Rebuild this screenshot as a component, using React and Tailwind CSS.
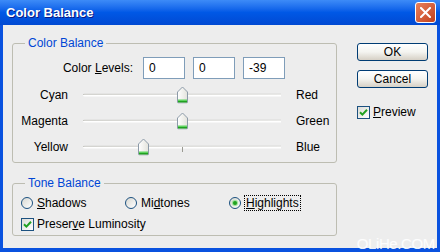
import React from 'react';

const sliders = [
  { left: 'Cyan', right: 'Red', value: 0 },
  { left: 'Magenta', right: 'Green', value: 0 },
  { left: 'Yellow', right: 'Blue', value: -39 },
];

function Thumb({ value }) {
  // track is 198px wide, center at 99, 100 units per half
  const x = 99 + value * 0.99 - 5.5;
  return (
    <svg width="11" height="17" viewBox="0 0 11 17" className="absolute top-1/2 -translate-y-1/2" style={{ left: x }}>
      <defs>
        <linearGradient id="thumbfill" x1="0" y1="0" x2="1" y2="0">
          <stop offset="0" stopColor="#ffffff" />
          <stop offset="1" stopColor="#e3e3dc" />
        </linearGradient>
      </defs>
      <path d="M0.5 5.5 L5.5 0.5 L10.5 5.5 L10.5 15.5 Q10.5 16.5 9.5 16.5 L1.5 16.5 Q0.5 16.5 0.5 15.5 Z" fill="url(#thumbfill)" stroke="#8c9aa8" />
      <rect x="1" y="13" width="9" height="1.5" fill="#5ed35e" />
      <rect x="1" y="14.5" width="9" height="1.5" fill="#21a121" />
    </svg>
  );
}

function SliderRow({ left, right, value }) {
  return (
    <div className="flex items-center h-[26px]">
      <div className="w-[55px] text-right">{left}</div>
      <div className="relative ml-[15px] w-[198px] h-full">
        <div className="absolute left-0 right-0 top-1/2 -translate-y-1/2 h-[3px] rounded-l-full border-t border-[#a8a8a0] bg-white" />
        <div className="absolute left-[99px] top-1/2 w-px h-[5px] bg-[#9a9a92]" />
        <Thumb value={value} />
      </div>
      <div className="ml-[15px]">{right}</div>
    </div>
  );
}

function Check({ className = '' }) {
  return (
    <span className={`inline-flex items-center justify-center w-[13px] h-[13px] border border-[#1c5180] bg-gradient-to-br from-[#dcdcd7] to-white ${className}`}>
      <svg width="9" height="9" viewBox="0 0 9 9">
        <path d="M1 4.2 L3.4 6.6 L8 1.8" fill="none" stroke="#21a121" strokeWidth="2" />
      </svg>
    </span>
  );
}

function Radio({ checked }) {
  return (
    <span className="inline-flex items-center justify-center w-[12px] h-[12px] rounded-full border border-[#1c5180] bg-gradient-to-br from-[#d8d8d2] to-white">
      {checked && <span className="w-[4px] h-[4px] rounded-full bg-[#21a121] shadow-[0_0_1px_1px_#8ee08e]" />}
    </span>
  );
}

function Button({ children, className = '' }) {
  return (
    <button className={`w-[71px] h-[18px] rounded-[3px] border border-[#003c74] bg-gradient-to-b from-white via-[#f4f4f0] to-[#d6d0c5] text-[12px] leading-none text-black ${className}`}>
      {children}
    </button>
  );
}

export default function App() {
  return (
    <div className="relative w-[440px] h-[252px] flex flex-col font-['Liberation_Sans',Arial,sans-serif] text-[12px] text-black bg-white overflow-hidden">
      <div className="h-[25px] flex items-center justify-between pl-[6px] pr-[4px] bg-gradient-to-b from-[#3d8bf7] via-[#0058e6] to-[#0149d2]">
        <span className="text-white font-bold text-[13px] [text-shadow:1px_1px_#0a1883]">Color Balance</span>
        <span className="w-[21px] h-[21px] rounded-[3px] border border-white bg-gradient-to-br from-[#e9805c] to-[#c2401a] flex items-center justify-center">
          <svg width="11" height="11" viewBox="0 0 11 11">
            <path d="M1 1 L10 10 M10 1 L1 10" stroke="white" strokeWidth="2" strokeLinecap="square" />
          </svg>
        </span>
      </div>

      <div className="flex-1 flex border-l-[3px] border-r-[3px] border-b-[4px] border-[#0a52df] bg-[#ededed] pl-[9px] pt-[11px]">
        <div className="w-[325px]">
          <fieldset className="h-[127px] border border-[#bdbdb2] rounded-[3px]">
            <legend className="ml-[12px] px-[3px] leading-[14px] text-[#0046d5]">Color Balance</legend>
            <div className="flex items-center mt-[7px] h-[22px]">
              <div className="w-[120px] text-right">
                Color <span className="underline">L</span>evels:
              </div>
              <div className="ml-[10px] flex gap-[8px]">
                {['0', '0', '-39'].map((v, i) => (
                  <div key={i} className="w-[42px] h-[22px] border border-[#7f9db9] bg-white pl-[5px] flex items-center">
                    {v}
                  </div>
                ))}
              </div>
            </div>
            <div className="mt-[3px]">
              {sliders.map((s) => (
                <SliderRow key={s.left} {...s} />
              ))}
            </div>
          </fieldset>

          <fieldset className="mt-[13px] h-[60px] border border-[#bdbdb2] rounded-[3px]">
            <legend className="ml-[12px] px-[3px] leading-[14px] text-[#0046d5]">Tone Balance</legend>
            <div className="flex items-center h-[16px] mt-[5px] pl-[8px]">
              <div className="w-[104px] flex items-center gap-[4px]">
                <Radio />
                <span><span className="underline">S</span>hadows</span>
              </div>
              <div className="w-[104px] flex items-center gap-[4px]">
                <Radio />
                <span>Mi<span className="underline">d</span>tones</span>
              </div>
              <div className="flex items-center gap-[3px]">
                <Radio checked />
                <span className="border border-dotted border-black px-[1px] leading-[14px]">
                  <span className="underline">H</span>ighlights
                </span>
              </div>
            </div>
            <div className="flex items-center h-[16px] mt-[5px] pl-[8px] gap-[3px]">
              <Check />
              <span>Preser<span className="underline">v</span>e Luminosity</span>
            </div>
          </fieldset>
        </div>

        <div className="ml-[20px] mt-[7px] flex flex-col">
          <Button>OK</Button>
          <Button className="mt-[9px]">Cancel</Button>
          <div className="mt-[15px] flex items-center gap-[3px]">
            <Check />
            <span><span className="underline">P</span>review</span>
          </div>
        </div>
      </div>

      <div className="absolute right-[5px] bottom-[1px] text-[15px] leading-none text-white/90 tracking-tight">OLiHe.COM</div>
    </div>
  );
}
